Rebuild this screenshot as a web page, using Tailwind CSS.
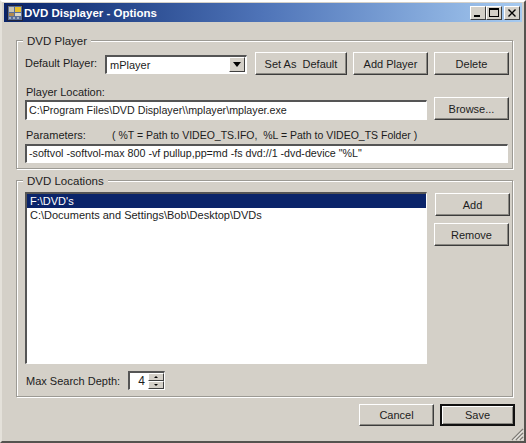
<!DOCTYPE html>
<html lang="en">
<head>
  <meta charset="UTF-8" />
  <title>DVD Displayer - Options</title>
  <script src="https://cdn.jsdelivr.net/npm/@tailwindcss/browser@4"></script>
</head>
<body class="m-0 overflow-hidden bg-white">
  <!-- window -->
  <div class="relative flex h-[443px] w-[526px] flex-col border-r-2 border-b-2 border-l-2 border-t-2 border-t-white border-l-[#e4e1da] border-r-[#55534f] border-b-[#55534f] bg-[#d4d0c8] pt-px pl-[2px] pr-[2px] font-['Liberation_Sans',Arial,sans-serif] text-[11px] leading-[14px] text-[#1c1c1c]">

    <!-- title bar -->
    <div class="flex h-[19px] w-full shrink-0 items-center bg-gradient-to-r from-[#0a246a] via-[#4f74b8] to-[#a6caf0] pr-[2px] pl-[3px]">
      <svg class="h-[16px] w-[16px] shrink-0" viewBox="0 0 16 16">
        <rect x="0.5" y="0.5" width="15" height="15" fill="#5b6f99" stroke="#20243c" />
        <rect x="2" y="2" width="5" height="5" fill="#c9c4b4" />
        <rect x="8" y="2" width="6" height="5" fill="#e8c030" />
        <rect x="2" y="8" width="5" height="3" fill="#b08a50" />
        <rect x="8" y="8" width="6" height="3" fill="#dcd8c8" />
        <path d="M2 13h2M6 13h2M10 13h2" stroke="#f0f0e8" />
      </svg>
      <span class="ml-px text-[11.5px] font-bold text-white">DVD Displayer - Options</span>
      <div class="ml-auto flex items-center">
        <div class="flex h-[14px] w-[16px] items-end justify-start border border-t-white border-l-white border-r-[#404040] border-b-[#404040] bg-[#d4d0c8] pb-[2px] pl-[3px]"><div class="h-[2px] w-[6px] bg-black"></div></div>
        <div class="flex h-[14px] w-[16px] items-center justify-center border border-t-white border-l-white border-r-[#404040] border-b-[#404040] bg-[#d4d0c8]"><div class="h-[9px] w-[10px] border border-t-2 border-black"></div></div>
        <div class="ml-[2px] flex h-[14px] w-[16px] items-center justify-center border border-t-white border-l-white border-r-[#404040] border-b-[#404040] bg-[#d4d0c8]">
          <svg class="h-[8px] w-[8px]" viewBox="0 0 8 8"><path d="M0.5 0.5l7 7M7.5 0.5l-7 7" stroke="#000" stroke-width="1.4" /></svg>
        </div>
      </div>
    </div>

    <!-- DVD Player group -->
    <div class="relative mt-[18px] ml-[12px] h-[129px] w-[497px] shrink-0 border border-[#9c9a94] pt-[11px] pl-[8px] shadow-[1px_1px_0_#fff,inset_1px_1px_0_#fff]">
      <span class="absolute -top-[7px] left-[6px] bg-[#d4d0c8] px-[4px] text-[11.5px]">DVD Player</span>

      <div class="flex h-[23px] items-center">
        <span class="w-[80px] shrink-0 pb-[1px]">Default Player:</span>
        <div class="mt-px flex h-[19px] w-[142px] shrink-0 items-center border-t-2 border-l-2 border-b border-r border-t-[#555] border-l-[#555] border-b-white border-r-white bg-white pr-px pl-[3px]">
          <span>mPlayer</span>
          <div class="ml-auto flex h-[15px] w-[16px] items-center justify-center border border-t-white border-l-white border-r-[#404040] border-b-[#404040] bg-[#d4d0c8]">
            <svg class="h-[5px] w-[8px]" viewBox="0 0 8 5"><path d="M0 0h8L4 5z" fill="#000" /></svg>
          </div>
        </div>
        <button class="ml-[8px] h-[23px] w-[92px] shrink-0 border border-t-white border-l-white border-r-[#3c3c3c] border-b-[#3c3c3c] bg-[#d4d0c8] shadow-[inset_-1px_-1px_0_#8a8882]">Set As&nbsp; Default</button>
        <button class="ml-[6px] h-[23px] w-[75px] shrink-0 border border-t-white border-l-white border-r-[#3c3c3c] border-b-[#3c3c3c] bg-[#d4d0c8] shadow-[inset_-1px_-1px_0_#8a8882]">Add Player</button>
        <button class="ml-[6px] h-[23px] w-[75px] shrink-0 border border-t-white border-l-white border-r-[#3c3c3c] border-b-[#3c3c3c] bg-[#d4d0c8] shadow-[inset_-1px_-1px_0_#8a8882]">Delete</button>
      </div>

      <div class="mt-[10px] pl-px">Player Location:</div>
      <div class="-mt-[2px] flex items-end">
        <div class="h-[20px] w-[402px] shrink-0 border-t-2 border-l-2 border-b border-r border-t-[#555] border-l-[#555] border-b-white border-r-white bg-white pt-px pl-[2px] text-[10.7px] whitespace-nowrap">C:\Program Files\DVD Displayer\\mplayer\mplayer.exe</div>
        <button class="ml-[7px] h-[23px] w-[75px] shrink-0 border border-t-white border-l-white border-r-[#3c3c3c] border-b-[#3c3c3c] bg-[#d4d0c8] shadow-[inset_-1px_-1px_0_#8a8882]">Browse...</button>
      </div>

      <div class="mt-[8px] flex pl-px">
        <span class="w-[86px] shrink-0">Parameters:</span>
        <span class="text-[10.5px] whitespace-pre">( %T = Path to VIDEO_TS.IFO,  %L = Path to VIDEO_TS Folder )</span>
      </div>
      <div class="mt-[2px] h-[19px] w-[483px] border-t-2 border-l-2 border-b border-r border-t-[#555] border-l-[#555] border-b-white border-r-white bg-white pl-[2px] text-[10.7px] whitespace-nowrap">-softvol -softvol-max 800 -vf pullup,pp=md -fs dvd://1 -dvd-device "%L"</div>
    </div>

    <!-- DVD Locations group -->
    <div class="relative mt-[11px] ml-[12px] h-[217px] w-[497px] shrink-0 border border-[#9c9a94] pt-[11px] pl-[8px] shadow-[1px_1px_0_#fff,inset_1px_1px_0_#fff]">
      <span class="absolute -top-[7px] left-[6px] bg-[#d4d0c8] px-[4px] text-[11.5px]">DVD Locations</span>
      <div class="flex">
        <div class="h-[172px] w-[402px] shrink-0 border-t-2 border-l-2 border-b border-r border-t-[#555] border-l-[#555] border-b-white border-r-white bg-white">
          <div class="h-[14px] bg-[#0a246a] pl-[3px] text-white">F:\DVD's</div>
          <div class="h-[13px] pl-[3px]">C:\Documents and Settings\Bob\Desktop\DVDs</div>
        </div>
        <div class="ml-[7px] flex flex-col gap-[7px] pt-px">
          <button class="ml-px h-[23px] w-[75px] border border-t-white border-l-white border-r-[#3c3c3c] border-b-[#3c3c3c] bg-[#d4d0c8] shadow-[inset_-1px_-1px_0_#8a8882]">Add</button>
          <button class="h-[23px] w-[75px] border border-t-white border-l-white border-r-[#3c3c3c] border-b-[#3c3c3c] bg-[#d4d0c8] shadow-[inset_-1px_-1px_0_#8a8882]">Remove</button>
        </div>
      </div>
      <div class="mt-[7px] flex items-center pl-px">
        <span class="w-[102px] shrink-0 whitespace-nowrap">Max Search Depth:</span>
        <div class="flex h-[19px] w-[37px] border-t-2 border-l-2 border-b border-r border-t-[#555] border-l-[#555] border-b-white border-r-white bg-white">
          <span class="w-[15px] pt-px text-right text-[12px]">4</span>
          <div class="ml-auto flex w-[16px] flex-col">
            <div class="flex h-[8px] items-center justify-center border border-t-white border-l-white border-r-[#404040] border-b-[#404040] bg-[#d4d0c8]"><svg class="h-[2px] w-[4px]" viewBox="0 0 4 2"><path d="M2 0l2 2H0z" fill="#000" /></svg></div>
            <div class="flex h-[8px] items-center justify-center border border-t-white border-l-white border-r-[#404040] border-b-[#404040] bg-[#d4d0c8]"><svg class="h-[2px] w-[4px]" viewBox="0 0 4 2"><path d="M0 0h4L2 2z" fill="#000" /></svg></div>
          </div>
        </div>
      </div>
    </div>

    <!-- bottom buttons -->
    <div class="mt-[7px] flex justify-end gap-[6px] pr-[7px]">
      <button class="h-[22px] w-[75px] border border-t-white border-l-white border-r-[#3c3c3c] border-b-[#3c3c3c] bg-[#d4d0c8] shadow-[inset_-1px_-1px_0_#8a8882]">Cancel</button>
      <button class="h-[22px] w-[75px] border-2 border-[#111] bg-[#d4d0c8] shadow-[inset_1px_1px_0_#fff,inset_-1px_-1px_0_#8a8882]">Save</button>
    </div>

    <!-- resize grip -->
    <svg class="absolute right-0 bottom-0 h-[14px] w-[14px]" viewBox="0 0 14 14">
      <path d="M13 2L2 13M13 6L6 13M13 10L10 13" stroke="#7f7d77" stroke-width="1.4" />
      <path d="M13 3.5L3.5 13M13 7.5L7.5 13M13 11.5L11.5 13" stroke="#fff" stroke-width="0.8" />
    </svg>
  </div>
</body>
</html>
